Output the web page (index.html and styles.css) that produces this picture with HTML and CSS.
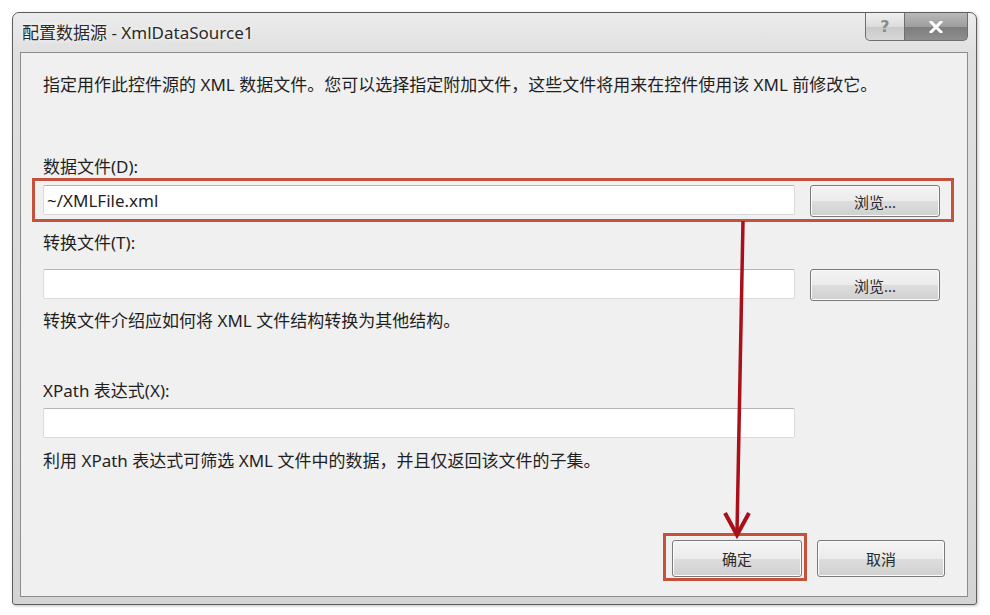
FILE: index.html
```html
<!DOCTYPE html>
<html lang="zh-CN">
<head>
    <meta charset="UTF-8">
    <title>配置数据源 - XmlDataSource1</title>
    <link rel="stylesheet" href="styles.css">
</head>
<body>
    <div class="dialog">
        <div class="titlebar">
            <span class="title">配置数据源 - XmlDataSource1</span>
            <div class="caption-buttons">
                <span class="cap cap-help">?</span>
                <span class="cap cap-close">
                    <svg width="14" height="12" viewBox="0 0 14 12">
                        <path d="M2 1 L12 11 M12 1 L2 11" stroke="#ffffff" stroke-width="3" stroke-linecap="square"/>
                    </svg>
                </span>
            </div>
        </div>

        <div class="content">
            <p class="intro">指定用作此控件源的 XML 数据文件。您可以选择指定附加文件，这些文件将用来在控件使用该 XML 前修改它。</p>

            <!-- 数据文件 -->
            <label class="label label-data">数据文件(D):</label>
            <div class="row">
                <input type="text" class="textbox" value="~/XMLFile.xml">
                <button class="btn">浏览...</button>
            </div>

            <!-- 转换文件 -->
            <label class="label label-transform">转换文件(T):</label>
            <div class="row">
                <input type="text" class="textbox">
                <button class="btn">浏览...</button>
            </div>
            <p class="hint hint-transform">转换文件介绍应如何将 XML 文件结构转换为其他结构。</p>

            <!-- XPath -->
            <label class="label label-xpath">XPath 表达式(X):</label>
            <div class="row">
                <input type="text" class="textbox">
            </div>
            <p class="hint hint-xpath">利用 XPath 表达式可筛选 XML 文件中的数据，并且仅返回该文件的子集。</p>

            <div class="actions">
                <button class="btn btn-action">确定</button>
                <button class="btn btn-action btn-cancel">取消</button>
            </div>
        </div>
    </div>

    <!-- 标注 -->
    <div class="mark mark-row"></div>
    <div class="mark mark-ok"></div>
    <svg class="arrow" width="990" height="615" viewBox="0 0 990 615">
        <path d="M743 221 L737 532" stroke="#a8101a" stroke-width="3.5" fill="none"/>
        <path d="M725 513 L737 535 L749 513" stroke="#a8101a" stroke-width="4" fill="none"/>
    </svg>
</body>
</html>
```

FILE: styles.css
```css
body {
    margin: 0;
    background-color: #ffffff;
    font-family: "Noto Sans", "Noto Sans CJK SC", sans-serif;
    color: #1f1f1f;
    width: 990px;
    height: 615px;
    overflow: hidden;
    position: relative;
}

.dialog {
    margin: 12px 0 0 12px;
    width: 965px;
    height: 593px;
    box-sizing: border-box;
    border: 1px solid #5e5e5e;
    border-radius: 7px 7px 3px 3px;
    background: linear-gradient(to bottom, #ececec, #e0e0e0 40px, #d4d4d4);
    display: flex;
    flex-direction: column;
    padding: 0 8px 7px 7px;
    box-shadow: 1px 1px 3px rgba(0, 0, 0, 0.25);
}

.titlebar {
    height: 39px;
    display: flex;
    justify-content: space-between;
    align-items: flex-start;
}

.title {
    font-size: 17px;
    line-height: 20px;
    margin-top: 10px;
    margin-left: 2px;
    color: #2a2a2a;
    text-shadow: 0 0 4px #ffffff;
}

.caption-buttons {
    display: flex;
    margin-right: 0;
}

.cap {
    height: 28px;
    display: flex;
    align-items: center;
    justify-content: center;
    border: 1px solid #6f6f6f;
    border-top: none;
    box-sizing: border-box;
}

.cap-help {
    width: 40px;
    border-radius: 0 0 0 5px;
    background: linear-gradient(to bottom, #f0f0f0, #dcdcdc 50%, #c9c9c9 51%, #d8d8d8);
    font-family: "DejaVu Sans", sans-serif;
    font-weight: bold;
    font-size: 16px;
    color: #8a8a8a;
}

.cap-close {
    width: 63px;
    border-left: none;
    border-radius: 0 0 5px 0;
    background: linear-gradient(to bottom, #b8b8b8, #9e9e9e 50%, #7c7c7c 51%, #8e8e8e);
}

.content {
    flex-grow: 1;
    background-color: #f0f0f0;
    border: 1px solid #8c8c8c;
    padding: 0 27px 0 22px;
    display: flex;
    flex-direction: column;
}

.intro,
.hint,
.label {
    display: block;
    margin: 0;
    font-size: 17px;
    line-height: 20px;
}

.intro {
    margin-top: 22px;
}

.label-data {
    margin-top: 62px;
    margin-bottom: 8px;
}

.label-transform {
    margin-top: 16px;
    margin-bottom: 16px;
}

.hint-transform {
    margin-top: 10px;
}

.label-xpath {
    margin-top: 50px;
    margin-bottom: 7px;
}

.hint-xpath {
    margin-top: 13px;
}

.row {
    display: flex;
    align-items: flex-start;
    gap: 15px;
}

.textbox {
    width: 752px;
    height: 30px;
    box-sizing: border-box;
    border: 1px solid #dadada;
    border-top-color: #b4b4b4;
    border-radius: 2px;
    background-color: #ffffff;
    font-family: "Noto Sans", "Noto Sans CJK SC", sans-serif;
    font-size: 17px;
    padding: 0 3px;
    color: #1f1f1f;
    outline: none;
}

.btn {
    width: 130px;
    height: 32px;
    box-sizing: border-box;
    border: 1px solid #7a7a7a;
    border-radius: 3px;
    background: linear-gradient(to bottom, #f4f4f4, #ebebeb 50%, #dddddd 51%, #d0d0d0);
    box-shadow: inset 0 0 0 1px #fbfbfb;
    font-family: "Noto Sans", "Noto Sans CJK SC", sans-serif;
    font-size: 15px;
    color: #2a2a2a;
    padding: 0;
}

.actions {
    margin-top: auto;
    margin-bottom: 19px;
    display: flex;
    justify-content: flex-end;
    gap: 15px;
    margin-right: -5px;
}

.btn-action {
    height: 37px;
}

.btn-cancel {
    width: 128px;
}

/* 标注 */
.mark {
    position: absolute;
    border: 3px solid #c4513b;
    box-sizing: border-box;
}

.mark-row {
    left: 32px;
    top: 178px;
    width: 922px;
    height: 44px;
}

.mark-ok {
    left: 663px;
    top: 533px;
    width: 144px;
    height: 48px;
}

.arrow {
    position: absolute;
    left: 0;
    top: 0;
    pointer-events: none;
}
```
